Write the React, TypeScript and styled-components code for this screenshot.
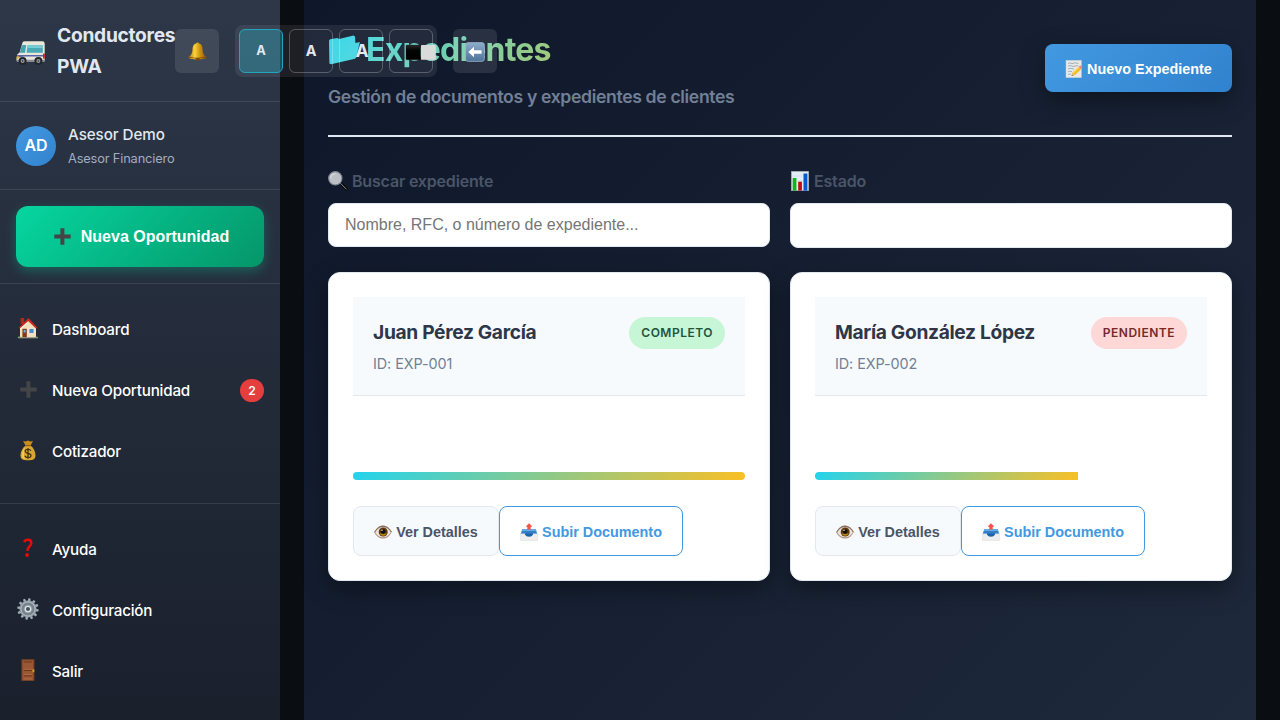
import React from 'react';
import styled, { createGlobalStyle, css } from 'styled-components';

const GlobalStyle = createGlobalStyle`
  *, *::before, *::after { box-sizing: border-box; }
  body {
    margin: 0;
    background: #0a0d12;
    font-family: Inter, 'Liberation Sans', sans-serif;
    line-height: 1.6;
    overflow: hidden;
  }
  h1, h2, p { margin: 0; }
  button, input { font-family: 'Liberation Sans', Arial, sans-serif; }
  svg { display: block; flex: none; overflow: visible; }
`;

/* ---------- icons ---------- */

const VanIcon = () => (
  <svg width="30" height="24" viewBox="0 0 30 24">
    <path d="M6.5 1.5Q7 .3 9 .3H26.500Q28.500.3 28.700 2.500V18.500Q28.700 20.500 27 20.700H2Q.4 20.500.5 18.500L1.200 13.500 3.600 11.500Z" fill="#e9e6da" />
    <path d="M5.800 4.800Q6.200 3.900 7 3.900H10.200L9 11.800H3.800Z" fill="#43a3ae" />
    <path d="M11.600 4.200H26.800V11.800H10.600Z" fill="#4ba9b5" />
    <path d="M12 4.200H26.800V7H11.600Z" fill="#79ccd1" />
    <path d="M1.200 13.900H28.700V15.400H9L1 16.600Z" fill="#5a64a6" />
    <rect x="27" y="12.600" width="1.800" height="5" fill="#e01d1d" />
    <path d="M.6 15.500L2.800 14.800 2.300 17.700.4 18Z" fill="#f0a51d" />
    <path d="M.4 18.800H28.700V20.400Q28.400 21 27.200 21H2Q.4 21 .4 19Z" fill="#8b8e90" />
    {[6.6, 22.4].map((cx) => (
      <g key={cx}>
        <circle cx={cx} cy="20" r="4" fill="#22262b" />
        <circle cx={cx} cy="20" r="2" fill="#9aa0a5" />
        <circle cx={cx} cy="20" r=".9" fill="#44484e" />
      </g>
    ))}
  </svg>
);

const BellIcon = () => (
  <svg width="19" height="19" viewBox="0 0 19 19">
    <defs>
      <linearGradient id="bell" x1="0" x2="1">
        <stop offset="0" stopColor="#a86a08" />
        <stop offset=".35" stopColor="#f9d43f" />
        <stop offset=".6" stopColor="#d79a12" />
        <stop offset="1" stopColor="#87520a" />
      </linearGradient>
    </defs>
    <circle cx="9.6" cy="1.8" r="1.5" fill="#c58a14" />
    <path d="M9.6 1.2C13 1.2 14.4 3.6 14.6 7 14.8 11 15.5 13 18.6 15.1 18.8 16.5 14.5 17.5 9.5 17.5 4.5 17.5.2 16.8.3 15.3 3.5 13 4.3 11 4.5 7 4.7 3.6 6.2 1.2 9.6 1.2Z" fill="url(#bell)" />
    <path d="M.4 15.2Q9.5 17.7 18.6 15" fill="none" stroke="#70430a" strokeWidth=".7" />
    <ellipse cx="9.7" cy="17.2" rx="2.3" ry="1.4" fill="#7d4c0a" />
  </svg>
);

const BackIcon = () => (
  <svg width="20" height="20" viewBox="0 0 20 20">
    <defs>
      <linearGradient id="back" x1="0" y1="0" x2="0" y2="1">
        <stop offset="0" stopColor="#8daccb" />
        <stop offset="1" stopColor="#4f7399" />
      </linearGradient>
    </defs>
    <rect x=".6" y=".6" width="18.8" height="18.8" rx="2.5" fill="url(#back)" stroke="#a0b8d1" strokeWidth=".7" />
    <path d="M3.3 10L9 4.7V8.2H16.6V11.8H9V15.3Z" fill="#fff" />
  </svg>
);

const ContrastIcon = () => (
  <svg width="30" height="15" viewBox="0 0 30 15">
    <defs>
      <linearGradient id="dark" x1="0" y1="0" x2="0" y2="1">
        <stop offset="0" stopColor="#2a2a2a" />
        <stop offset=".35" stopColor="#050505" />
        <stop offset="1" stopColor="#000" />
      </linearGradient>
    </defs>
    <rect width="14.6" height="14.8" rx=".8" fill="url(#dark)" stroke="#222" strokeWidth=".4" />
    <rect x="15" width="14.8" height="14.8" rx=".8" fill="#dadada" />
  </svg>
);

const PlusIcon = ({ tone }: { tone: string }) => (
  <svg width="17" height="17" viewBox="0 0 17 17">
    <path d="M6.4.3H10.4V6.5H16.7V10.4H10.4V16.7H6.4V10.4H.3V6.5H6.4Z" fill={tone} />
  </svg>
);

const HouseIcon = () => (
  <svg width="22" height="22" viewBox="0 0 22 22">
    <rect x="3.6" y="1" width="3.6" height="6" fill="#b3261c" />
    <path d="M3 10L11.5 2.5 19 10V20.6H3Z" fill="#f1dfbd" />
    <path d="M11.5 1L20.3 10.4 19 11.6 11.3 4.2 3 11.6 1.8 10.4Z" fill="#c92a20" />
    <path d="M3 11.6L11.3 4.2 11.3 5.4 3.2 13Z" fill="#fff3d9" />
    <rect x="5.4" y="11.8" width="4.4" height="8.8" fill="#7c3a1d" />
    <rect x="6.6" y="13" width="2" height="2.5" fill="#64b8df" />
    <rect x="12" y="11.6" width="5" height="4.8" fill="#478fc4" stroke="#fbf6ea" strokeWidth=".7" />
    <path d="M.4 20.8Q1.8 18 3.4 19.8V20.8ZM18 20.8Q19.4 17.6 21.6 20.8Z" fill="#4d8a25" />
    <path d="M1 20.8H21" stroke="#aea995" strokeWidth=".9" />
  </svg>
);

const MoneyIcon = () => (
  <svg width="16" height="21" viewBox="0 0 16 21">
    <path d="M3 1L5.6 1.4 8 .6 10.4 1.4 13 .9 10.6 5.6H5.6Z" fill="#c98c1e" />
    <path d="M5.6 5.4H10.6C13.6 8 15.5 11.5 15.5 15.2 15.5 19 13.4 20.3 8 20.3S.5 19 .5 15.2C.5 11.5 2.6 8 5.6 5.4Z" fill="#d9a531" />
    <path d="M5.2 7C3.2 9 1.8 12 1.9 15.5 2 18 3.2 18.8 5 19.2 3.4 15 3.6 10.5 5.2 7Z" fill="#f0cb5c" />
    <path d="M5.2 5.6H11" stroke="#8d5a12" strokeWidth="1.1" />
    <path d="M10.9 10.8C10.3 9.7 9.3 9.3 8 9.3 6.4 9.3 5.2 10 5.2 11.3 5.2 14 11 12.6 11 15.4 11 16.7 9.7 17.5 8 17.5 6.5 17.5 5.3 16.9 4.8 15.7M8 8V18.8" fill="none" stroke="#3f3112" strokeWidth="1.2" />
  </svg>
);

const QuestionIcon = () => (
  <svg width="10" height="20" viewBox="0 0 10 20">
    <path d="M1.3 4.1C1.8 2.3 3.2 1.7 5 1.7 7.3 1.7 8.3 3 8.3 4.9 8.3 8.4 4.5 8.6 4.3 13" fill="none" stroke="#e60a0a" strokeWidth="2.5" />
    <circle cx="4.1" cy="17" r="1.9" fill="#e60a0a" />
  </svg>
);

const GearIcon = () => (
  <svg width="22" height="22" viewBox="0 0 22 22">
    {Array.from({ length: 12 }, (_, i) => (
      <path key={i} d="M9.5 4L10 .3H12L12.5 4Z" fill="#a3aeb8" transform={`rotate(${i * 30 + 8} 11 11)`} />
    ))}
    <circle cx="11" cy="11" r="8.5" fill="#8f9aa4" />
    <circle cx="11" cy="11" r="7" fill="#77828c" stroke="#bec7ce" strokeWidth=".8" />
    <circle cx="11" cy="11" r="4.3" fill="#8e99a2" />
    <circle cx="11" cy="11" r="2.7" fill="#47515c" stroke="#dde3e8" strokeWidth="1.3" />
  </svg>
);

const DoorIcon = () => (
  <svg width="14" height="22" viewBox="0 0 14 22">
    <rect x=".4" y=".2" width="13" height="21.6" fill="#7b4226" />
    <rect x="1.5" y="1.3" width="10.8" height="20" fill="#9a5733" />
    <path d="M2.8 3H11M2.8 11.5H11M2.8 16.8H11" stroke="#6d371d" strokeWidth="1" />
    <path d="M2.8 10.2H11M2.8 15.5H11M2.8 19.9H11" stroke="#b56f47" strokeWidth=".8" />
    <rect x="11.5" y="10.3" width="1.8" height="3" rx=".6" fill="#c8a429" />
  </svg>
);

const MemoIcon = () => (
  <svg width="18" height="18" viewBox="0 0 18 18">
    <rect x="1" y=".3" width="15.4" height="17.4" fill="#e8eaea" stroke="#c5c9ca" strokeWidth=".5" />
    <path d="M3 3.5L5 2.8 7 3.6 10 2.8 13.5 3.5M3 6.2L5 5.5 8 6.4 13 5.6M3 9L5 8.2 9 9M3 11.8L5 11 7 11.7M3 14.5L6 13.9" fill="none" stroke="#a0a5a9" strokeWidth=".9" />
    <path d="M6.6 15.9L7.6 12.500 13.600 6.800 16 9.200 10 14.900Z" fill="#f3b91f" />
    <path d="M7.600 12.500L13.600 6.800 14.400 7.600 8.500 13.400Z" fill="#ffdc56" />
    <path d="M13.600 6.800L14.700 5.800Q15.500 5.300 16.400 6.200L16.900 6.800Q17.400 7.500 16.900 8.200L16 9.200Z" fill="#ef7f90" />
    <path d="M6.600 15.900L7.600 12.500 10 14.900Z" fill="#e2bd86" />
    <path d="M6.600 15.900L7 14.700 7.800 15.500Z" fill="#333" />
  </svg>
);

const SearchIcon = () => (
  <svg width="20" height="20" viewBox="0 0 20 20">
    <path d="M11.2 12.8L13 10.8 20 17.6Q20.200 19 18.300 20Z" fill="#08090b" />
    <path d="M12.400 12.200L18.600 18.400" stroke="#8a8e93" strokeWidth="1" />
    <circle cx="7.300" cy="7.300" r="6.700" fill="#bcbfc5" stroke="#7d838a" strokeWidth="1.100" />
    <path d="M2.700 7.500A4.600 4.600 0 0 1 7.500 2.600" fill="none" stroke="#d6d9de" strokeWidth="1.200" />
  </svg>
);

const ChartIcon = () => (
  <svg width="18" height="20" viewBox="0 0 18 20">
    <rect x=".3" y=".3" width="17.4" height="19.4" fill="#e4edf5" stroke="#9ba7b3" strokeWidth=".6" />
    <path d="M.6 5H17.4M.6 10H17.4M.6 15H17.4" stroke="#c6d3df" strokeWidth=".5" />
    <rect x="1.7" y="7" width="3.7" height="12.6" fill="#0fb51b" />
    <rect x="7.2" y="10.7" width="3.7" height="8.9" fill="#c20d0d" />
    <rect x="12.5" y="2.5" width="3.9" height="17.1" fill="#075ac7" />
  </svg>
);

const EyeIcon = () => (
  <svg width="18" height="14" viewBox="0 0 18 14">
    <path d="M.3 7.5C3 1.7 6 .4 9 .4S15.5 2.4 17.7 7C15 12.3 12 13.6 9 13.6S3 12.3.3 7.5Z" fill="#b29585" />
    <path d="M1.3 7.5C3.5 3.5 6.2 2.2 9 2.2S14.8 3.8 16.8 7.2C14.6 10.8 12 12.3 9 12.3S3.5 11.2 1.3 7.5Z" fill="#eae5e2" />
    <path d="M.6 7.3C3 2.5 6 1.3 9 1.3S15.2 2.7 17.5 7.1" fill="none" stroke="#7b6155" strokeWidth=".9" />
    <circle cx="9.2" cy="7" r="4.5" fill="#5e3a0d" />
    <path d="M5.7 8.5A3.8 3.8 0 0 0 12.7 8.5Z" fill="#b8860f" />
    <circle cx="9.2" cy="6.6" r="2.3" fill="#160e08" />
    <circle cx="8" cy="5.2" r=".7" fill="#fff" />
  </svg>
);

const OutboxIcon = () => (
  <svg width="18" height="18" viewBox="0 0 18 18">
    <path d="M2.3 6H15.7L17.6 12H.4Z" fill="#367fc8" />
    <path d="M2.3 6H15.7L16.3 8H1.7Z" fill="#63abe4" />
    <path d="M.3 10.8H4.8Q5.5 14 9 14T13.2 10.8H17.7V17.4H.3Z" fill="#eeeeee" stroke="#d7d7d7" strokeWidth=".4" />
    <path d="M4.9 10.5H13.1Q12.5 13.8 9 13.8T4.9 10.5Z" fill="#1f62a8" />
    <path d="M9 .2L12.4 3.7H10.7V6.6H7.3V3.7H5.6Z" fill="#fb5146" />
  </svg>
);

const FolderIcon = () => (
  <svg width="32" height="30" viewBox="0 0 32 30">
    <defs>
      <linearGradient id="folder" x1="0" y1="0" x2="1" y2="1">
        <stop offset="0" stopColor="#2fd3e8" />
        <stop offset="1" stopColor="#44d5dd" />
      </linearGradient>
    </defs>
    <path d="M1 5.5L2 4.3 9.5 2.9 11 3.9 25.5.4 27 1.4 27.4 7.9 31.8 7 28.2 22.5 27 23.8 3 29.3 1.4 28.5Z" fill="url(#folder)" />
  </svg>
);

/* ---------- layout ---------- */

const Shell = styled.div`
  display: flex;
  height: 720px;
  overflow: hidden;
`;

const Sidebar = styled.aside`
  position: relative;
  z-index: 2;
  flex: none;
  width: 280px;
  height: 720px;
  background: linear-gradient(180deg, #2d3748 0%, #1a202c 100%);
  color: #fff;
`;

const divider = css`border-bottom: 1px solid rgba(255, 255, 255, 0.1);`;

const BrandBar = styled.header`
  ${divider}
  display: flex;
  align-items: center;
  height: 102px;
  padding: 0 16px;
`;

const Brand = styled.div`
  display: flex;
  flex: none;
  align-items: center;
  gap: 11px;
  width: 159px;
`;

const BrandMark = styled.span`
  padding-top: 4px;
`;

const BrandName = styled.span`
  font-size: 19.2px;
  font-weight: 700;
  line-height: 30.7px;
  letter-spacing: -0.28px;
  color: #e2e8f0;
`;

const Tools = styled.div`
  display: flex;
  flex: none;
  align-items: center;
  gap: 16px;
`;

const ToolButton = styled.button`
  display: flex;
  align-items: center;
  justify-content: center;
  width: 44px;
  height: 44px;
  padding: 2px 0 0;
  border: 0;
  border-radius: 6px;
  background: rgba(255, 255, 255, 0.1);
`;

const SizeGroup = styled.div`
  display: flex;
  gap: 6px;
  padding: 4px;
  border-radius: 8px;
  background: rgba(255, 255, 255, 0.08);
`;

const SizeButton = styled.button<{ $size?: number; $active?: boolean }>`
  display: flex;
  align-items: center;
  justify-content: center;
  width: 44px;
  height: 44px;
  padding: 0 0 0 ${(p) => (p.$size === 17.6 ? 2 : 0)}px;
  border: 1px solid ${(p) => (p.$active ? '#22a6bf' : 'rgba(255, 255, 255, 0.25)')};
  border-radius: 6px;
  background: ${(p) => (p.$active ? 'rgba(34, 211, 238, 0.26)' : 'transparent')};
  color: #e2e8f0;
  font-family: Inter, sans-serif;
  font-size: ${(p) => p.$size ?? 16}px;
  font-weight: 700;
`;

const ContrastSlot = styled.span`
  margin-left: 20px;
  padding-top: 3px;
`;

const UserBar = styled.section`
  ${divider}
  display: flex;
  align-items: center;
  gap: 12px;
  height: 88px;
  padding: 0 16px;
`;

const Avatar = styled.div`
  display: flex;
  align-items: center;
  justify-content: center;
  width: 40px;
  height: 40px;
  border-radius: 50%;
  background: linear-gradient(135deg, #4299e1, #3182ce);
  font-size: 16px;
  font-weight: 600;
`;

const UserName = styled.p`
  padding-top: 1px;
  font-size: 15.2px;
  font-weight: 500;
  line-height: 24px;
  letter-spacing: -0.08px;
  color: #e2e8f0;
`;

const UserRole = styled.p`
  margin-top: 1px;
  font-size: 12.8px;
  line-height: 21px;
  letter-spacing: -0.15px;
  color: #a0aec0;
`;

const CtaBar = styled.section`
  ${divider}
  height: 94px;
  padding: 16px;
`;

const CtaButton = styled.button`
  display: flex;
  align-items: center;
  justify-content: center;
  gap: 10px;
  width: 100%;
  height: 61px;
  padding: 0 0 0 3px;
  border: 0;
  border-radius: 12px;
  background: linear-gradient(135deg, #06d6a0, #059669);
  box-shadow: 0 4px 12px rgba(6, 214, 160, 0.3);
  color: #fff;
  font-size: 16px;
  font-weight: 600;
`;

const Nav = styled.nav<{ $main?: boolean }>`
  ${(p) => p.$main && divider}
  padding: 15px 0 ${(p) => (p.$main ? '21px' : '0')};
`;

const NavItem = styled.a`
  display: flex;
  align-items: center;
  gap: 12px;
  height: 61px;
  padding: 0 16px;
`;

const NavLabel = styled.span`
  padding-top: 2px;
  font-size: 15.2px;
  font-weight: 500;
  letter-spacing: -0.21px;
`;

const NavIcon = styled.span`
  display: flex;
  justify-content: center;
  width: 24px;
  padding-bottom: 3px;
`;

const NavBadge = styled.span`
  margin-left: auto;
  width: 24px;
  height: 23px;
  border-radius: 12px;
  background: #e53e3e;
  font-size: 12px;
  font-weight: 600;
  line-height: 23px;
  text-align: center;
`;

const Page = styled.main`
  flex: 1;
  margin: 0 24px;
  padding: 24px;
  background: linear-gradient(135deg, #0f172a 0%, #1e293b 100%);
`;

const PageHeader = styled.header`
  display: flex;
  align-items: center;
  justify-content: space-between;
  height: 113px;
  padding-bottom: 24px;
  border-bottom: 2px solid #e2e8f0;
`;

const TitleRow = styled.div`
  display: flex;
  align-items: center;
  height: 51px;
`;

const Title = styled.h1`
  width: 369px;
  margin-left: 6px;
  background: linear-gradient(135deg, #40d5df 0%, #fbbf24 100%);
  background-clip: text;
  -webkit-background-clip: text;
  color: transparent;
  font-size: 32px;
  font-weight: 700;
  line-height: 51px;
  letter-spacing: -0.8px;
`;

const Subtitle = styled.p`
  margin-top: 8px;
  font-size: 17.6px;
  font-weight: 600;
  line-height: 28px;
  letter-spacing: -0.34px;
  color: #718096;
`;

const PrimaryButton = styled.button`
  display: flex;
  align-items: center;
  justify-content: center;
  gap: 4px;
  width: 187px;
  height: 48px;
  padding: 2px 0 0;
  border: 0;
  border-radius: 8px;
  background: linear-gradient(135deg, #4299e1, #3182ce);
  box-shadow: 0 8px 24px rgba(0, 0, 0, 0.4);
  color: #fff;
  font-size: 14.4px;
  font-weight: 600;
`;

const Columns = styled.div<{ $top: number }>`
  display: grid;
  grid-template-columns: 1fr 1fr;
  align-items: start;
  gap: 20px;
  margin-top: ${(p) => p.$top}px;
`;

const FieldLabel = styled.label`
  display: flex;
  align-items: center;
  height: 26px;
  margin-bottom: 8px;
  font-size: 16px;
  font-weight: 600;
  letter-spacing: -0.18px;
  color: #4a5568;
`;

const FieldIcon = styled.span`
  display: flex;
  justify-content: center;
  width: 20px;
  margin-right: 4px;
  padding-bottom: 2px;
`;

const fieldBox = css`
  display: block;
  width: 100%;
  border: 1px solid #e2e8f0;
  border-radius: 8px;
  background: #fff;
`;

const SearchInput = styled.input`
  ${fieldBox}
  height: 44px;
  padding: 0 16px;
  font-size: 16px;
  &::placeholder { color: #757575; }
`;

const StateSelect = styled.div`
  ${fieldBox}
  height: 45px;
`;

const Card = styled.article`
  height: 309px;
  padding: 24px;
  border: 1px solid #e2e8f0;
  border-radius: 12px;
  background: #fff;
  box-shadow: 0 8px 24px rgba(0, 0, 0, 0.4);
`;

const CardHeader = styled.header`
  display: flex;
  align-items: flex-start;
  justify-content: space-between;
  height: 99px;
  padding: 20px;
  border-bottom: 1px solid #e2e8f0;
  background: #f7fafc;
`;

const ClientName = styled.h2`
  font-size: 19.2px;
  font-weight: 700;
  line-height: 31px;
  letter-spacing: -0.33px;
  color: #2d3748;
`;

const FileId = styled.p`
  margin-top: 4px;
  font-size: 14.4px;
  line-height: 23px;
  letter-spacing: -0.08px;
  color: #718096;
`;

const Status = styled.span<{ $done: boolean }>`
  padding: 6px 12px;
  border-radius: 20px;
  background: ${(p) => (p.$done ? '#c6f6d5' : '#fed7d7')};
  color: ${(p) => (p.$done ? '#22543d' : '#742a2a')};
  font-size: 12px;
  font-weight: 600;
  line-height: 20px;
  letter-spacing: 0.5px;
`;

const Track = styled.div`
  height: 8px;
  margin: 76px 0 26px;
  border-radius: 4px;
  overflow: hidden;
`;

const Fill = styled.div`
  height: 100%;
  background: linear-gradient(135deg, #22d3ee, #fbbf24);
`;

const Actions = styled.div`
  display: flex;
`;

const ActionButton = styled.button<{ $outline?: boolean }>`
  display: flex;
  align-items: center;
  justify-content: center;
  gap: 4px;
  width: ${(p) => (p.$outline ? 184 : 146)}px;
  height: 50px;
  padding: 1px 0 0;
  border: 1px solid ${(p) => (p.$outline ? '#4299e1' : '#e2e8f0')};
  border-radius: 8px;
  background: ${(p) => (p.$outline ? '#fff' : '#f7fafc')};
  color: ${(p) => (p.$outline ? '#4299e1' : '#4a5568')};
  font-size: 14.4px;
  font-weight: 600;
`;

const mainNav = [
  { label: 'Dashboard', icon: <HouseIcon /> },
  { label: 'Nueva Oportunidad', icon: <PlusIcon tone="#444546" />, badge: 2 },
  { label: 'Cotizador', icon: <MoneyIcon /> },
];

const footerNav = [
  { label: 'Ayuda', icon: <QuestionIcon /> },
  { label: 'Configuración', icon: <GearIcon /> },
  { label: 'Salir', icon: <DoorIcon /> },
];

const files = [
  { name: 'Juan Pérez García', id: 'EXP-001', status: 'COMPLETO', progress: 100 },
  { name: 'María González López', id: 'EXP-002', status: 'PENDIENTE', progress: 67 },
];

export default function App() {
  return (
    <Shell>
      <GlobalStyle />
      <Sidebar>
        <BrandBar>
          <Brand>
            <BrandMark><VanIcon /></BrandMark>
            <BrandName>Conductores PWA</BrandName>
          </Brand>
          <Tools>
            <ToolButton><BellIcon /></ToolButton>
            <SizeGroup>
              <SizeButton $size={12.8} $active>A</SizeButton>
              <SizeButton $size={14.4}>A</SizeButton>
              <SizeButton $size={17.6}>A</SizeButton>
              <SizeButton><ContrastSlot><ContrastIcon /></ContrastSlot></SizeButton>
            </SizeGroup>
            <ToolButton><BackIcon /></ToolButton>
          </Tools>
        </BrandBar>
        <UserBar>
          <Avatar>AD</Avatar>
          <div>
            <UserName>Asesor Demo</UserName>
            <UserRole>Asesor Financiero</UserRole>
          </div>
        </UserBar>
        <CtaBar>
          <CtaButton><PlusIcon tone="#454545" />Nueva Oportunidad</CtaButton>
        </CtaBar>
        <Nav $main>
          {mainNav.map((item) => (
            <NavItem key={item.label}>
              <NavIcon>{item.icon}</NavIcon>
              <NavLabel>{item.label}</NavLabel>
              {item.badge && <NavBadge>{item.badge}</NavBadge>}
            </NavItem>
          ))}
        </Nav>
        <Nav>
          {footerNav.map((item) => (
            <NavItem key={item.label}>
              <NavIcon>{item.icon}</NavIcon>
              <NavLabel>{item.label}</NavLabel>
            </NavItem>
          ))}
        </Nav>
      </Sidebar>
      <Page>
        <PageHeader>
          <div>
            <TitleRow>
              <FolderIcon />
              <Title>Expedientes</Title>
            </TitleRow>
            <Subtitle>Gestión de documentos y expedientes de clientes</Subtitle>
          </div>
          <PrimaryButton><MemoIcon />Nuevo Expediente</PrimaryButton>
        </PageHeader>
        <Columns $top={32}>
          <div>
            <FieldLabel><FieldIcon><SearchIcon /></FieldIcon>Buscar expediente</FieldLabel>
            <SearchInput placeholder="Nombre, RFC, o número de expediente..." />
          </div>
          <div>
            <FieldLabel><FieldIcon><ChartIcon /></FieldIcon>Estado</FieldLabel>
            <StateSelect />
          </div>
        </Columns>
        <Columns $top={24}>
          {files.map((file) => (
            <Card key={file.id}>
              <CardHeader>
                <div>
                  <ClientName>{file.name}</ClientName>
                  <FileId>ID: {file.id}</FileId>
                </div>
                <Status $done={file.progress === 100}>{file.status}</Status>
              </CardHeader>
              <Track><Fill style={{ width: `${file.progress}%` }} /></Track>
              <Actions>
                <ActionButton><EyeIcon />Ver Detalles</ActionButton>
                <ActionButton $outline><OutboxIcon />Subir Documento</ActionButton>
              </Actions>
            </Card>
          ))}
        </Columns>
      </Page>
    </Shell>
  );
}
